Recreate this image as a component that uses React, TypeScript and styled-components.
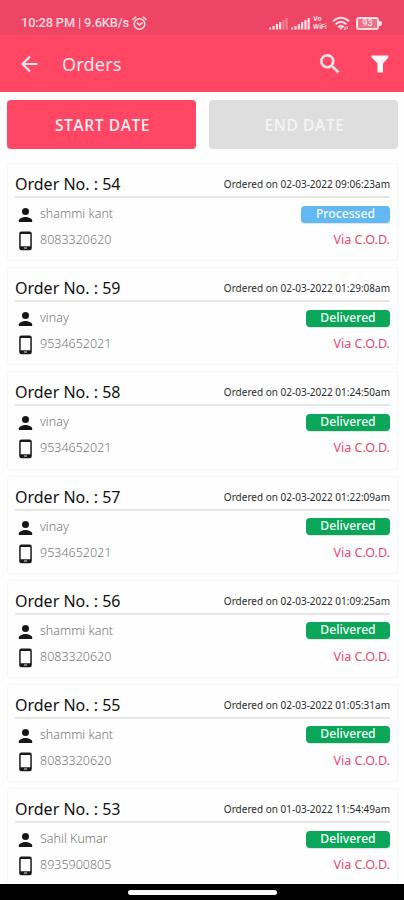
import React from 'react';
import styled, { createGlobalStyle } from 'styled-components';

const GlobalStyle = createGlobalStyle`
  * { box-sizing: border-box; }
  body { margin: 0; background: #fefefe; overflow: hidden; }
`;

const Screen = styled.div`
  width: 404px;
  height: 900px;
  display: flex;
  flex-direction: column;
  overflow: hidden;
  background: #fefefe;
  font-family: 'Noto Sans', 'Open Sans', sans-serif;
  white-space: nowrap;
`;

const StatusBar = styled.div`
  height: 35px;
  flex: none;
  padding: 11px 22px 0 21px;
  display: flex;
  justify-content: space-between;
  background: #ee4564;
  color: #ffdbe1;
`;

const StatusText = styled.div`
  display: flex;
  align-items: center;
  height: 24px;
  gap: 3px;
  font: 500 12.8px/24px Roboto, sans-serif;
  letter-spacing: -0.13px;
`;

const StatusIcons = styled.div`
  display: flex;
  align-items: center;
  height: 24px;
  gap: 3px;
`;

const NetworkLabel = styled.div`
  width: 16px;
  display: flex;
  flex-direction: column;
  font: 700 7px/8px Roboto, sans-serif;
`;

const AppBar = styled.header`
  height: 57px;
  flex: none;
  display: flex;
  align-items: center;
  padding: 0 15px 0 19px;
  background: #ff4665;
  color: #ffe9ec;
`;

const Title = styled.h1`
  flex: 1;
  margin: 1px 0 0 22px;
  font-size: 18px;
  line-height: 24px;
  font-weight: 400;
  letter-spacing: 0.2px;
`;

const Actions = styled.div`
  display: flex;
  align-items: center;
  gap: 28px;
`;

const Filters = styled.div`
  flex: none;
  display: grid;
  grid-template-columns: 189px 189px;
  gap: 13px;
  padding: 8px 6px 0 7px;
`;

const DateButton = styled.button<{ $inactive?: boolean }>`
  height: 49px;
  border: 0;
  border-radius: 4px;
  padding: 0 0 0 2px;
  color: ${(p) => (p.$inactive ? '#f4f4f4' : '#ffecef')};
  background: ${(p) => (p.$inactive ? '#dedede' : '#ff4665')};
  font: 600 15.5px/20px 'Open Sans', sans-serif;
  letter-spacing: 0.6px;
`;

const List = styled.main`
  flex: 1;
  min-height: 0;
  overflow: hidden;
  display: flex;
  flex-direction: column;
  gap: 6px;
  padding: 14px 6px 0 7px;
`;

const Card = styled.article`
  flex: none;
  height: 98.2px;
  padding: 8px 7px 0;
  border: 1px solid #f6f6f6;
  border-radius: 3px;
  background: #fefefe;
`;

const CardHead = styled.div`
  height: 26px;
  display: flex;
  align-items: center;
  justify-content: space-between;
  border-bottom: 2px solid #e6e6e6;
`;

const OrderNo = styled.div`
  font-size: 16px;
  line-height: 24px;
  color: #111;
`;

const OrderedOn = styled.div`
  font-size: 10px;
  line-height: 24px;
  color: #2b2b2b;
`;

const Row = styled.div<{ $first?: boolean }>`
  height: 26px;
  margin-top: ${(p) => (p.$first ? '3px' : '0')};
  display: flex;
  align-items: center;
  justify-content: space-between;
`;

const Detail = styled.div`
  display: flex;
  align-items: center;
  gap: 5px;
  padding-left: 1px;
  font-size: 12.5px;
  line-height: 18px;
  font-weight: 300;
  color: #777;
`;

const Badge = styled.div<{ $processed?: boolean }>`
  width: ${(p) => (p.$processed ? '89px' : '84px')};
  height: 17px;
  border-radius: 4px;
  background: ${(p) => (p.$processed ? '#62b8f3' : '#0ba659')};
  box-shadow: 0 1px 1px rgba(0, 0, 0, 0.12);
  color: #f2fbf7;
  text-align: center;
  font-size: 12.2px;
  line-height: 16px;
  font-weight: 500;
`;

const Payment = styled.div`
  font-size: 12.6px;
  line-height: 18px;
  color: #e84a70;
`;

const NavBar = styled.footer`
  height: 16px;
  flex: none;
  display: flex;
  justify-content: center;
  padding-top: 6px;
  background: #000;
`;

const Handle = styled.div`
  width: 149px;
  height: 5px;
  border-radius: 3px;
  background: #f8f8f8;
`;

const Alarm = () => (
  <svg width="15" height="15" viewBox="0 0 15 15" fill="none" stroke="currentColor" strokeWidth="1.6" strokeLinecap="round">
    <circle cx="7.5" cy="8" r="5.3" />
    <path d="M1 3.3 3.7 1.2M14 3.3 11.3 1.2M5.3 7.2l2.2 1.7 2.7-2" />
  </svg>
);

const Signal = ({ weak }: { weak?: boolean }) => (
  <svg width="19" height="13" viewBox="0 0 19 13" fill="currentColor">
    <path d="M0 10.5h2.2v2H0zM3.4 9h2.3v3.5H3.4zM6.8 7h2.3v5.5H6.8z" />
    <path d="M10 5h2.3v7.5H10z" />
    <path d="M13.3 3h2.3v9.5h-2.3zM16.5 1h2.3v11.5h-2.3z" opacity={weak ? 0.35 : 1} />
  </svg>
);

const Wifi = () => (
  <svg width="18" height="15" viewBox="0 0 18 15" fill="none" stroke="currentColor" strokeWidth="2.1">
    <path d="M1 5.2Q9-1.7 17 5.2M3.6 8.3Q9 3.5 14.4 8.3M6.2 11.2Q9 8.5 11.8 11.2" />
    <path d="m7 11.5 2 2.5 2-2.5z" fill="currentColor" stroke="none" />
    <path d="M13 11v3M15.3 10v3" strokeWidth="1.2" />
  </svg>
);

const BatteryBox = styled.div`
  display: flex;
  align-items: center;
  margin-left: 3px;
`;

const BatteryBody = styled.div`
  width: 23px;
  height: 13px;
  border: 2px solid currentColor;
  border-radius: 3px;
  background: #ef7188;
  text-align: center;
  font: 700 9px/9px Roboto, sans-serif;
`;

const BatteryTip = styled.div`
  width: 3px;
  height: 5px;
  border-radius: 0 2px 2px 0;
  background: currentColor;
`;

const BackArrow = () => (
  <svg width="21" height="20" viewBox="0 0 21 20" fill="none" stroke="currentColor" strokeWidth="2.2">
    <path d="M18.5 10H4M11 2.5 3.5 10l7.5 7.5" />
  </svg>
);

const Search = () => (
  <svg width="26" height="26" viewBox="0 0 24 24" fill="currentColor" stroke="currentColor" strokeWidth=".4">
    <path d="M15.5 14h-.79l-.28-.27A6.47 6.47 0 0 0 16 9.5 6.5 6.5 0 1 0 9.5 16c1.61 0 3.09-.59 4.23-1.57l.27.28v.79l5 4.99L20.49 19zm-6 0a4.5 4.5 0 1 1 0-9 4.5 4.5 0 0 1 0 9z" />
  </svg>
);

const Funnel = () => (
  <svg width="18" height="18" viewBox="0 0 18 18" fill="#fff8f9">
    <path d="M.5.5h17v1.8L12 8.5v9H6.5v-9L.5 2.3z" />
  </svg>
);

const Person = () => (
  <svg width="19" height="20" viewBox="0 0 19 20" fill="#161616">
    <circle cx="9.5" cy="7.5" r="3.5" />
    <path d="M2.8 18v-1.6c0-2.3 4.5-3.5 6.7-3.5s6.7 1.2 6.7 3.5V18z" />
  </svg>
);

const Phone = () => (
  <svg width="19" height="22" viewBox="0 0 19 22">
    <path fillRule="evenodd" fill="#191919" d="M5.5 2.5h8a2.3 2.3 0 0 1 2.3 2.3V19a2.3 2.3 0 0 1-2.3 2.3h-8A2.3 2.3 0 0 1 3.2 19V4.8a2.3 2.3 0 0 1 2.3-2.3zM4.7 5v12.3h9.6V5z" />
    <path d="M8 19h3" stroke="#ddd" />
  </svg>
);

const orders = [
  { id: 54, at: '02-03-2022 09:06:23am', name: 'shammi kant', phone: '8083320620', status: 'Processed' },
  { id: 59, at: '02-03-2022 01:29:08am', name: 'vinay', phone: '9534652021', status: 'Delivered' },
  { id: 58, at: '02-03-2022 01:24:50am', name: 'vinay', phone: '9534652021', status: 'Delivered' },
  { id: 57, at: '02-03-2022 01:22:09am', name: 'vinay', phone: '9534652021', status: 'Delivered' },
  { id: 56, at: '02-03-2022 01:09:25am', name: 'shammi kant', phone: '8083320620', status: 'Delivered' },
  { id: 55, at: '02-03-2022 01:05:31am', name: 'shammi kant', phone: '8083320620', status: 'Delivered' },
  { id: 53, at: '01-03-2022 11:54:49am', name: 'Sahil Kumar', phone: '8935900805', status: 'Delivered' },
];

export default function App() {
  return (
    <Screen>
      <GlobalStyle />
      <StatusBar>
        <StatusText>10:28 PM | 9.6KB/s <Alarm /></StatusText>
        <StatusIcons>
          <Signal weak />
          <Signal />
          <NetworkLabel><span>Vo</span><span>WiFi</span></NetworkLabel>
          <Wifi />
          <BatteryBox>
            <BatteryBody>93</BatteryBody>
            <BatteryTip />
          </BatteryBox>
        </StatusIcons>
      </StatusBar>
      <AppBar>
        <BackArrow />
        <Title>Orders</Title>
        <Actions>
          <Search />
          <Funnel />
        </Actions>
      </AppBar>
      <Filters>
        <DateButton>START DATE</DateButton>
        <DateButton $inactive>END DATE</DateButton>
      </Filters>
      <List>
        {orders.map((o) => (
          <Card key={o.id}>
            <CardHead>
              <OrderNo>Order No. : {o.id}</OrderNo>
              <OrderedOn>Ordered on {o.at}</OrderedOn>
            </CardHead>
            <Row $first>
              <Detail><Person />{o.name}</Detail>
              <Badge $processed={o.status === 'Processed'}>{o.status}</Badge>
            </Row>
            <Row>
              <Detail><Phone />{o.phone}</Detail>
              <Payment>Via C.O.D.</Payment>
            </Row>
          </Card>
        ))}
      </List>
      <NavBar><Handle /></NavBar>
    </Screen>
  );
}
